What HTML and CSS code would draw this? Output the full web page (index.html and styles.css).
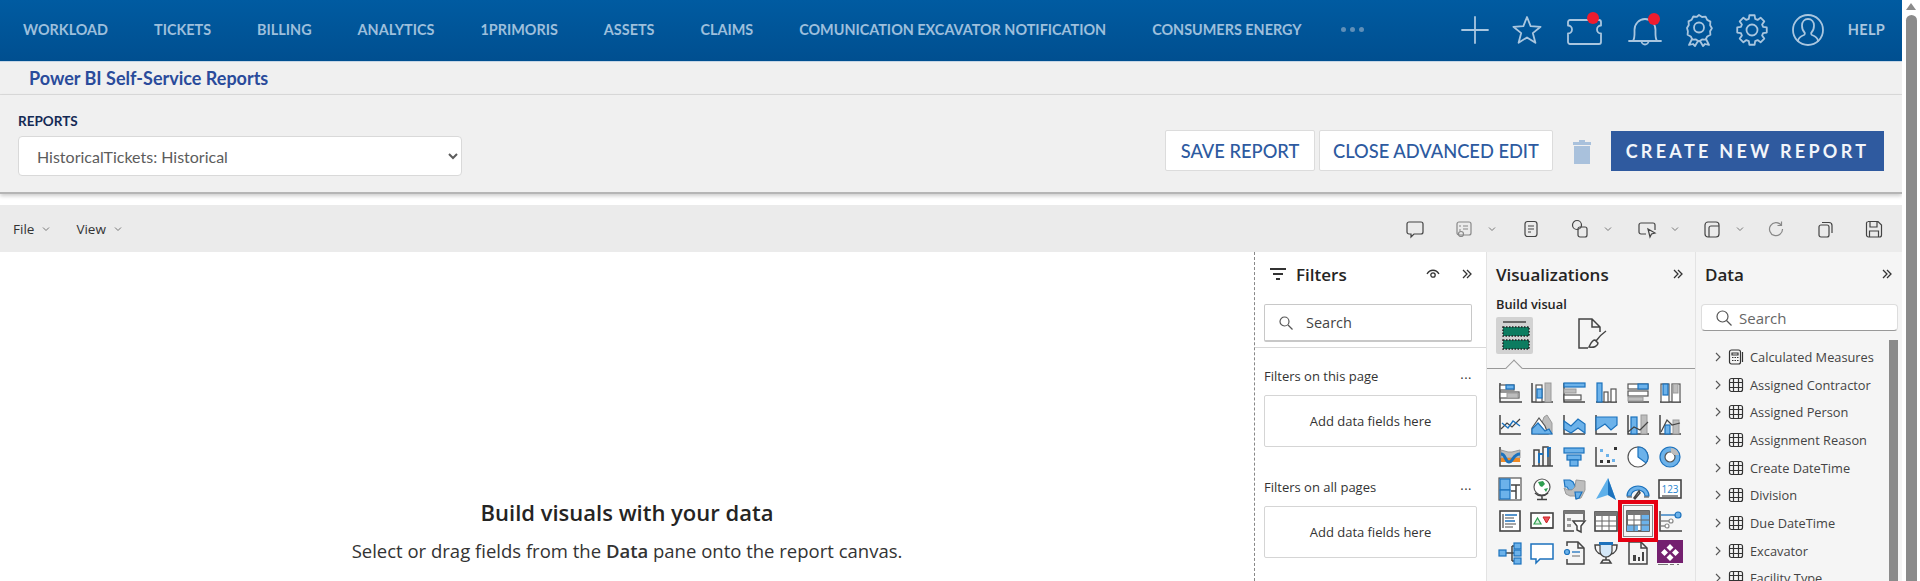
FILE: index.html
```html
<!DOCTYPE html>
<html lang="en">
<head>
<meta charset="utf-8">
<title>Power BI Self-Service Reports</title>
<link rel="stylesheet" href="styles.css">
</head>
<body>
<svg class="defs" aria-hidden="true">
  <symbol id="tbl" viewBox="0 0 16 16"><rect x="1.5" y="1.5" width="13" height="13" rx="2" class="thin"/><path d="M1.5 5.5h13M1.5 10.5h13M5.5 1.5v13M10.5 1.5v13" class="thin"/></symbol>
  <symbol id="dbl" viewBox="0 0 12 12"><path d="M2 2l4 4-4 4M6 2l4 4-4 4" class="chev2"/></symbol>
  <symbol id="dn" viewBox="0 0 10 10"><path d="M2 3.5l3 3 3-3" class="chevd"/></symbol>
</svg>
<div class="page">
  <header class="nav">
    <a class="nav-i">WORKLOAD</a><a class="nav-i">TICKETS</a><a class="nav-i">BILLING</a><a class="nav-i">ANALYTICS</a><a class="nav-i">1PRIMORIS</a><a class="nav-i">ASSETS</a><a class="nav-i">CLAIMS</a><a class="nav-i">COMUNICATION EXCAVATOR NOTIFICATION</a><a class="nav-i">CONSUMERS ENERGY</a>
    <span class="more"><i></i><i></i><i></i></span>
    <div class="nav-icons">
      <svg class="ni" width="26" height="26" viewBox="0 0 26 26"><path d="M13 0v26M0 13h26"/></svg>
      <svg class="ni" width="30" height="30" viewBox="0 0 30 30"><path d="M15 2l3.600 9.200 10 .6-7.800 6.300 2.600 9.700L15 22.400l-8.400 5.400 2.600-9.700-7.800-6.300 10-.6z"/></svg>
      <svg class="ni" width="38" height="32" viewBox="0 0 38 32"><path d="M4 6h29a2 2 0 0 1 2 2v3.500a4 4 0 0 0 0 8V28a2 2 0 0 1-2 2H4a2 2 0 0 1-2-2v-8.500a4 4 0 0 0 0-8V8a2 2 0 0 1 2-2z"/><circle class="dot" cx="27" cy="4" r="6"/></svg>
      <svg class="ni" width="34" height="32" viewBox="0 0 34 32"><path d="M1 27h32M5 27c2-3 1.500-7 1.500-11 0-6 4.500-11 10.500-11s10.500 5 10.500 11c0 4-.5 8 1.500 11M13.500 27a3.500 3.500 0 0 0 7 0"/><circle class="dot" cx="26" cy="5" r="6"/></svg>
      <svg class="ni" width="26" height="32" viewBox="0 0 26 32"><path d="M13 1l3 2 3.600-.3 1.600 3.200 3.200 1.700-.3 3.600 1.800 3-1.800 3 .3 3.600-3.200 1.700-1.600 3.200-3.600-.3-3 2-3-2-3.600.3-1.600-3.200-3.200-1.700.3-3.600L1 14l1.800-3-.3-3.600 3.200-1.700 1.600-3.200 3.600.3z"/><circle cx="13" cy="13.500" r="5"/><path d="M6 25l-3 6 4-1 2 2 3-5M20 25l3 6-4-1-2 2-3-5"/></svg>
      <svg class="ni" width="32" height="32" viewBox="0 0 32 32"><polygon points="27.05,12.83 30.77,13.4 30.77,18.6 27.05,19.17 26.06,21.58 28.29,24.6 24.6,28.29 21.58,26.06 19.17,27.05 18.6,30.77 13.4,30.77 12.83,27.05 10.42,26.06 7.4,28.29 3.71,24.6 5.94,21.58 4.95,19.17 1.23,18.6 1.23,13.4 4.95,12.83 5.94,10.42 3.71,7.4 7.4,3.71 10.42,5.94 12.83,4.95 13.4,1.23 18.6,1.23 19.17,4.95 21.58,5.94 24.6,3.71 28.29,7.4 26.06,10.42"/><circle cx="16" cy="16" r="5.500"/></svg>
      <svg class="ni" width="32" height="32" viewBox="0 0 32 32"><circle cx="16" cy="16" r="15"/><path d="M6 27c.5-4 3-5 6-6 1-.5 1-2 .5-2.500-1.500-1.500-2.500-4-2.500-7 0-4 2.500-6.500 6-6.500s6 2.500 6 6.500c0 3-1 5.500-2.500 7-.5.5-.5 2 .5 2.500 3 1 5.500 2 6 6"/></svg>
      <span class="help">HELP</span>
    </div>
  </header>

  <div class="title-row"><h1 class="title">Power BI Self-Service Reports</h1></div>

  <section class="reports">
    <div class="rep-left">
      <label class="rep-label" for="rep">REPORTS</label>
      <select class="rep-select" id="rep"><option>HistoricalTickets: Historical</option></select>
    </div>
    <div class="rep-actions">
      <button class="btn">SAVE REPORT</button>
      <button class="btn btn-close">CLOSE ADVANCED EDIT</button>
      <svg class="trash" width="18" height="24" viewBox="0 0 18 24"><path d="M6 0h6v2h6v3H0V2h6zM1 6h16v18H1z"/></svg>
      <button class="btn-primary">CREATE NEW REPORT</button>
    </div>
  </section>

  <div class="toolbar">
    <span class="menu">File<svg class="dn" width="10" height="10"><use href="#dn"/></svg></span>
    <span class="menu menu-v">View<svg class="dn" width="10" height="10"><use href="#dn"/></svg></span>
    <div class="tb-right">
      <svg class="ti" width="20" height="20" viewBox="0 0 20 20"><path d="M4 3h12a2 2 0 0 1 2 2v8a2 2 0 0 1-2 2H9l-3 3v-3H4a2 2 0 0 1-2-2V5a2 2 0 0 1 2-2z"/></svg>
      <span class="tg tw"><svg class="ti mut" width="20" height="20" viewBox="0 0 20 20"><rect x="3" y="3" width="14" height="13" rx="2"/><path d="M9 7h5M9 10h5M5 7h2M5 11h2"/><circle cx="7" cy="15" r="2.500"/></svg><svg class="dn" width="10" height="10"><use href="#dn"/></svg></span>
      <svg class="ti" width="20" height="20" viewBox="0 0 20 20"><rect x="4" y="2.500" width="12" height="15" rx="2.500"/><path d="M7 7h6M7 10h6M7 13h3"/></svg>
      <span class="tg tw"><svg class="ti" width="20" height="20" viewBox="0 0 20 20"><circle cx="7" cy="6" r="4.500"/><rect x="8" y="8" width="9" height="10" rx="2"/></svg><svg class="dn" width="10" height="10"><use href="#dn"/></svg></span>
      <span class="tg"><svg class="ti" width="20" height="20" viewBox="0 0 20 20"><path d="M9 15H4a2 2 0 0 1-2-2V6a2 2 0 0 1 2-2h12a2 2 0 0 1 2 2v5M11 10l2 8 1.500-3 3.500-1z"/></svg><svg class="dn" width="10" height="10"><use href="#dn"/></svg></span>
      <span class="tg tn2"><svg class="ti" width="20" height="20" viewBox="0 0 20 20"><rect x="3" y="3" width="14" height="15" rx="3"/><path d="M7 18V9a2 2 0 0 1 2-2h8"/></svg><svg class="dn" width="10" height="10"><use href="#dn"/></svg></span>
      <svg class="ti mut tn3" width="20" height="20" viewBox="0 0 20 20"><path d="M15 6a6.500 6.500 0 1 0 1.500 4M15.500 2.500V6.500h-4"/></svg>
      <svg class="ti tw" width="20" height="20" viewBox="0 0 20 20"><rect x="4" y="6" width="10" height="12" rx="2"/><path d="M7 3.500h7a3 3 0 0 1 3 3V14"/></svg>
      <svg class="ti tw" width="20" height="20" viewBox="0 0 20 20"><path d="M4 2.500h10l3.500 3.500v10a2 2 0 0 1-2 2h-11a2 2 0 0 1-2-2v-12a2 2 0 0 1 2-1.500zM6 3v5h7V3M5.500 18v-6h9v6"/></svg>
    </div>
  </div>

  <main class="work">
    <div class="canvas">
      <h2 class="empty-h">Build visuals with your data</h2>
      <p class="empty-p">Select or drag fields from the <b>Data</b> pane onto the report canvas.</p>
    </div>

    <aside class="filters">
      <div class="p-head">
        <svg class="f-ico" width="16" height="12" viewBox="0 0 16 12"><path d="M0 1h16M3 6h10M6 11h4"/></svg>
        <span class="p-title">Filters</span>
        <svg class="eye" width="14" height="12" viewBox="0 0 14 12"><path d="M1 6c3-5 9-5 12 0"/><circle cx="7" cy="7" r="2.200"/></svg>
        <svg class="dbl" width="12" height="12"><use href="#dbl"/></svg>
      </div>
      <div class="f-search">
        <svg class="s-ico" width="14" height="14" viewBox="0 0 14 14"><circle cx="5.500" cy="5.500" r="4.500"/><path d="M9 9l4.500 4.500"/></svg>
        <span>Search</span>
      </div>
      <div class="f-body">
        <div class="f-label"><span>Filters on this page</span><span class="ell">...</span></div>
        <div class="f-box">Add data fields here</div>
        <div class="f-label f-label2"><span>Filters on all pages</span><span class="ell">...</span></div>
        <div class="f-box">Add data fields here</div>
      </div>
    </aside>

    <aside class="viz">
      <div class="p-head p-head-v"><span class="p-title">Visualizations</span><svg class="dbl" width="12" height="12"><use href="#dbl"/></svg></div>
      <div class="build">Build visual</div>
      <div class="tabs">
        <span class="tab-sel"><svg width="30" height="30" viewBox="0 0 30 30"><path d="M3 1h23" class="a"/><rect x="3" y="6" width="26" height="9" class="grn"/><rect x="3" y="19" width="26" height="9" class="grn"/></svg></span>
        <svg class="tab2" width="30" height="34" viewBox="0 0 30 34"><path d="M11 31H2V2h13l8 8v5M15 2v8h8" class="a"/><path d="M29 14c-3 2-7 6-10 10" class="a"/><path d="M18 23c-3 0-4 3-6 7 5 1 9-1 9-4z" class="a"/></svg>
      </div>
      <div class="vgrid">
        <svg class="v" viewBox="0 0 24 24"><path class="a" d="M2 2v19h22"/><rect class="w" x="2" y="4" width="14" height="5"/><rect class="b" x="8" y="4" width="8" height="4"/><rect class="w" x="2" y="11" width="19" height="6"/><rect class="g" x="9" y="12" width="11" height="5"/></svg>
        <svg class="v" viewBox="0 0 24 24"><path class="a" d="M2 2v19h21"/><rect class="w" x="6" y="4" width="6" height="17"/><rect class="b" x="7" y="8" width="5" height="9"/><rect class="g" x="15" y="2" width="6" height="19"/></svg>
        <svg class="v" viewBox="0 0 24 24"><path class="a" d="M2 2v19h21"/><rect class="b" x="2" y="2" width="21" height="4"/><rect class="g" x="2" y="8" width="12" height="4"/><rect class="w" x="2" y="14" width="17" height="5"/></svg>
        <svg class="v" viewBox="0 0 24 24"><path class="a" d="M2 21h21"/><rect class="b" x="3" y="2" width="5" height="19"/><rect class="w" x="10" y="11" width="4" height="10"/><rect class="w" x="17" y="8" width="5" height="13"/></svg>
        <svg class="v" viewBox="0 0 24 24"><path class="a" d="M2 21h21"/><rect class="w" x="2" y="3" width="20" height="5"/><rect class="b" x="12" y="3" width="10" height="5"/><rect class="w" x="2" y="10" width="20" height="5"/><rect class="g" x="2" y="16" width="15" height="4"/></svg>
        <svg class="v" viewBox="0 0 24 24"><path class="a" d="M2 21h21"/><rect class="w" x="3" y="3" width="8" height="18"/><rect class="b" x="5" y="3" width="5" height="11"/><rect class="w" x="14" y="3" width="8" height="18"/><rect class="g" x="15" y="3" width="5" height="9"/></svg>

        <svg class="v" viewBox="0 0 24 24"><path class="a" d="M2 2v19h21"/><path class="a1" d="M3 16l6-6 5 4 8-8"/><path class="bl" d="M4 10l6 5 5-7 7 5"/></svg>
        <svg class="v" viewBox="0 0 24 24"><path class="g" d="M14 4l3-2 5 8v11H8z"/><path class="w" d="M2 15L9 5l6 8 3 8H2z"/><path class="b" d="M2 21v-5l6-6 7 8 4-2 3 5z"/></svg>
        <svg class="v" viewBox="0 0 24 24"><path class="a" d="M2 2v19h21"/><path class="b" d="M2 8l7 5 7-7 7 5v9l-7-5-7 5-7-4z"/></svg>
        <svg class="v" viewBox="0 0 24 24"><path class="a" d="M2 2v19h21"/><path class="b" d="M2 4h21v8l-6 5-6-6-9 6z"/></svg>
        <svg class="v" viewBox="0 0 24 24"><path class="a" d="M2 2v19h21"/><rect class="b" x="5" y="4" width="6" height="17"/><rect class="g" x="15" y="2" width="6" height="19"/><path class="a1" d="M2 19l6-5 6 3 8-8"/></svg>
        <svg class="v" viewBox="0 0 24 24"><path class="a" d="M2 2v19h21"/><rect class="b" x="7" y="12" width="5" height="9"/><rect class="g" x="15" y="7" width="6" height="14"/><path class="a1" d="M3 19l6-12 5 5 8-2"/></svg>

        <svg class="v" viewBox="0 0 24 24"><path class="a" d="M2 2v19h21"/><path class="g" d="M3 5l7 2 4 0 8-2v8H3z"/><rect class="o" x="3" y="13" width="19" height="4"/><path class="thick" d="M3 9c5 0 4 8 8 8s4-8 11-8"/></svg>
        <svg class="v" viewBox="0 0 24 24"><path class="a" d="M2 21h21M4 21V5h5v16M13 21V2h5v19"/><path class="a" d="M20 21V3"/><path class="bt" d="M9 18V9h4M18 12V3h3"/></svg>
        <svg class="v" viewBox="0 0 24 24"><rect class="b" x="2" y="3" width="20" height="5"/><rect class="b" x="5" y="10" width="14" height="5"/><rect class="b" x="8" y="15" width="8" height="6"/></svg>
        <svg class="v" viewBox="0 0 24 24"><path class="a" d="M2 2v19h21"/><path class="sq-b" d="M6 4h3v3H6zM12 9h3v3h-3zM18 14h3v3h-3z"/><path class="sq-d" d="M20 2h3v3h-3zM6 15h3v3H6zM13 15h3v3h-3z"/></svg>
        <svg class="v" viewBox="0 0 24 24"><circle class="w" cx="12" cy="12" r="10"/><path class="b" d="M12 2a10 10 0 0 1 8 16l-8-6z"/></svg>
        <svg class="v" viewBox="0 0 24 24"><circle class="b" cx="12" cy="12" r="10"/><circle class="w" cx="12" cy="12" r="5"/><path class="gf" d="M13 3a9 9 0 0 1 8 7h-5a4 4 0 0 0-3-2z"/></svg>

        <svg class="v" viewBox="0 0 24 24"><rect class="w" x="1" y="1" width="22" height="22"/><rect class="b" x="2" y="2" width="10" height="11"/><rect class="b" x="2" y="13" width="10" height="9"/><path class="a" d="M13 8h9M18 8v14M13 14h5"/></svg>
        <svg class="v" viewBox="0 0 24 24"><circle cx="12" cy="10" r="8" class="globe"/><path class="grf" d="M8 5l5-1 2 3-3 3-2-1zM14 12l4-1-2 4z"/><path class="a" d="M5 16a9 9 0 0 0 13 0M12 19v3M7 22.500h10"/></svg>
        <svg class="v" viewBox="0 0 24 24"><path class="b" d="M2 3h6l3 2 3 6-2 2H7L5 10H3z"/><path class="g" d="M14 3l9 1v9l-4 8-5 1-1-3h-5l-4-2-2-6 4 2h4l3-3z"/><path class="b" d="M13 15h7l-3 6-3 1z"/></svg>
        <svg class="v" viewBox="0 0 24 24"><path class="arrow" d="M14 1l8 22-8-5-12 4z"/><path class="arrow2" d="M14 1v17l8 5z"/></svg>
        <svg class="v" viewBox="0 0 24 24"><path class="b" d="M1 19a11 10 0 0 1 22 0h-4a7 6 0 0 0-14 0z"/><path class="a" d="M8 21l5-7 1 2-5 6z"/><path class="a1" d="M1 20h5M18 20h5"/></svg>
        <svg class="v" viewBox="0 0 24 24"><rect class="w-d" x="1" y="3" width="22" height="18"/><text x="12" y="16" class="num">123</text><path class="a1" d="M4 19h16"/></svg>

        <svg class="v" viewBox="0 0 24 24"><rect class="w-d" x="2" y="2" width="20" height="20"/><path class="bl" d="M7 6h12M7 12h10"/><path class="gl" d="M7 9h9M7 15h11M7 18h8"/><path class="a1" d="M5 5v14"/></svg>
        <svg class="v" viewBox="0 0 24 24"><rect class="w-d" x="1" y="4" width="22" height="15"/><path class="tri-g" d="M4 15l3.500-6 3.500 6z"/><path class="tri-r" d="M13 8h7l-3.500 6z"/><path class="a1" d="M1 19h22"/></svg>
        <svg class="v" viewBox="0 0 24 24"><path class="a" d="M12 22H2V2h20v9"/><path class="hdr" d="M2 2h20v3H2z"/><path class="sq-g" d="M5 9h4v3H5zM5 15h4v3H5z"/><path class="b-d" d="M11 12h12l-4 5v6l-4-2v-4z"/></svg>
        <svg class="v" viewBox="0 0 24 24"><rect class="w-d" x="1" y="3" width="22" height="19"/><rect class="hdr" x="1" y="3" width="22" height="4"/><path class="gl2" d="M1 12h22M1 17h22M8 7v15M15 7v15"/></svg>
        <span class="v-hl"><svg class="v" viewBox="0 0 24 24"><rect class="w-d" x="1" y="2" width="22" height="20"/><rect class="hdr" x="1" y="2" width="22" height="4"/><rect class="bf" x="1" y="16" width="11" height="6"/><rect class="bf" x="15" y="6" width="8" height="16"/><path class="gl2" d="M1 11h22M1 16h22M8 6v16M15 6v16"/></svg></span>
        <svg class="v" viewBox="0 0 24 24"><path class="a" d="M2 2v20h22"/><path class="bl" d="M3 6h15"/><circle class="b" cx="20" cy="6" r="3"/><path class="gl" d="M3 12h10M3 17h6"/><circle class="c-g" cx="13" cy="12" r="2"/><circle class="c-g" cx="9" cy="17" r="2"/></svg>

        <svg class="v" viewBox="0 0 24 24"><path class="a" d="M8 12h6M14 5v15M14 5h2M14 12h2M14 20h2"/><rect class="b" x="1" y="9" width="7" height="6"/><rect class="b" x="16" y="2" width="7" height="6"/><rect class="b" x="16" y="9" width="7" height="6"/><rect class="b" x="16" y="17" width="7" height="6"/></svg>
        <svg class="v" viewBox="0 0 24 24"><path class="bw" d="M1 3h22v15H10l-4 4v-4H1z"/></svg>
        <svg class="v" viewBox="0 0 24 24"><path class="a" d="M5 5V1h11l6 6v16H5v-5"/><path class="a" d="M16 1v6h6"/><circle class="b" cx="5" cy="11" r="2.500"/><path class="bl" d="M10 11h8"/><path class="gl" d="M10 15h8"/></svg>
        <svg class="v" viewBox="0 0 24 24"><path class="a" d="M6 4H1c0 6 2 8 6 9M18 4h5c0 6-2 8-6 9M12 15v4M7 22h10l-2-3H9z"/><path class="cup" d="M6 2h12v8a6 6 0 0 1-12 0z"/><rect class="bf2" x="5" y="1" width="14" height="3"/></svg>
        <svg class="v" viewBox="0 0 24 24"><path class="a" d="M3 1h12l6 6v16H3z"/><path class="a" d="M15 1v6h6"/><path class="bars" d="M7 14h3v6H7zM12 16h2v4h-2zM16 11h2v9h-2z"/></svg>
        <svg class="v" viewBox="0 0 24 24"><rect class="pur" x="-1" y="-1" width="26" height="23"/><path class="dia" d="M12 3l3.500 3.500-3.500 3.500-3.500-3.500zM6.500 8l3.500 3.500L6.500 15 3 11.500zM17.500 8l3.500 3.500-3.500 3.500-3.500-3.500zM12 13l3.500 3.500L12 20l-3.500-3.500z"/><path class="dash" d="M0 23.500h10M12 23.500h4M19 23.500h2"/></svg>
      </div>
    </aside>

    <aside class="data">
      <div class="p-head p-head-d"><span class="p-title">Data</span><svg class="dbl" width="12" height="12"><use href="#dbl"/></svg></div>
      <div class="d-search">
        <svg class="s-ico" width="16" height="16" viewBox="0 0 16 16"><circle cx="6.500" cy="6.500" r="5.500"/><path d="M10.500 10.500l5 5"/></svg>
        <span>Search</span>
      </div>
      <div class="d-body">
        <ul class="tree">
          <li><svg class="tc" width="8" height="10" viewBox="0 0 8 10"><path d="M2 1l4 4-4 4"/></svg><svg class="calc" width="16" height="16" viewBox="0 0 16 16"><rect x="1.500" y="1" width="11" height="14" rx="2"/><path d="M4 4h6v2H4zM4 8.500h1.500M6.500 8.500H8M9 8.500h1.500M4 11.500h1.500M6.500 11.500H8M9 11.500h1.500M14.500 3v10"/></svg>Calculated Measures</li>
          <li><svg class="tc" width="8" height="10" viewBox="0 0 8 10"><path d="M2 1l4 4-4 4"/></svg><svg class="tbl" width="16" height="16"><use href="#tbl"/></svg>Assigned Contractor</li>
          <li><svg class="tc" width="8" height="10" viewBox="0 0 8 10"><path d="M2 1l4 4-4 4"/></svg><svg class="tbl" width="16" height="16"><use href="#tbl"/></svg>Assigned Person</li>
          <li><svg class="tc" width="8" height="10" viewBox="0 0 8 10"><path d="M2 1l4 4-4 4"/></svg><svg class="tbl" width="16" height="16"><use href="#tbl"/></svg>Assignment Reason</li>
          <li><svg class="tc" width="8" height="10" viewBox="0 0 8 10"><path d="M2 1l4 4-4 4"/></svg><svg class="tbl" width="16" height="16"><use href="#tbl"/></svg>Create DateTime</li>
          <li><svg class="tc" width="8" height="10" viewBox="0 0 8 10"><path d="M2 1l4 4-4 4"/></svg><svg class="tbl" width="16" height="16"><use href="#tbl"/></svg>Division</li>
          <li><svg class="tc" width="8" height="10" viewBox="0 0 8 10"><path d="M2 1l4 4-4 4"/></svg><svg class="tbl" width="16" height="16"><use href="#tbl"/></svg>Due DateTime</li>
          <li><svg class="tc" width="8" height="10" viewBox="0 0 8 10"><path d="M2 1l4 4-4 4"/></svg><svg class="tbl" width="16" height="16"><use href="#tbl"/></svg>Excavator</li>
          <li><svg class="tc" width="8" height="10" viewBox="0 0 8 10"><path d="M2 1l4 4-4 4"/></svg><svg class="tbl" width="16" height="16"><use href="#tbl"/></svg>Facility Type</li>
        </ul>
        <div class="d-thumb"></div>
      </div>
    </aside>
  </main>
</div>
<div class="vscroll"><span class="up"></span><span class="thumb"></span></div>
</body>
</html>
```
FILE: styles.css
```css
* { box-sizing: border-box; }
html, body { margin: 0; height: 581px; overflow: hidden; background: #fff; }
body { display: flex; font-family: "Open Sans", sans-serif; color: #252423; }
.defs { display: none; }
.thin { fill: none; stroke: #333; stroke-width: 1.2; }
.chev2 { fill: none; stroke: #333; stroke-width: 1.3; }
.chevd { fill: none; stroke: #777; stroke-width: 1; }
.page { width: 1902px; height: 581px; display: flex; flex-direction: column; }

.nav { height: 62px; flex: none; display: flex; align-items: center; padding: 0 17px 2px 23px; gap: 46px;
  background: linear-gradient(#005ba1, #004f90); border-bottom: 1px solid #c6d6e6; }
.nav-i { font: 700 14.400px "Lato", sans-serif; color: #9dbfdc; white-space: nowrap; }
.more { display: flex; gap: 4px; margin-left: -7px; }
.more i { width: 5px; height: 5px; border-radius: 50%; background: #5f8fb8; }
.nav-icons { margin-left: auto; display: flex; align-items: center; gap: 24px; }
.ni { fill: none; stroke: #a9c6df; stroke-width: 1.800; stroke-linejoin: round; stroke-linecap: round; overflow: visible; }
.ni .dot { fill: #ee1c2e; stroke: none; }
.help { font: 700 14.500px "Lato", sans-serif; color: #a9c6df; letter-spacing: .3px; }

.title-row { height: 33px; flex: none; background: #f0f0f0; border-bottom: 1px solid #dcdcdc; padding-left: 29px; display: flex; align-items: center; }
.title { margin: 0; font: 700 18px "Lato", sans-serif; color: #2a4b9b; }

.reports { height: 99px; flex: none; background: #f0f0f0; border-bottom: 2px solid #b5b5b5; box-shadow: 0 2px 4px rgba(0,0,0,.2); display: flex; justify-content: space-between; padding: 19px 18px 0; position: relative; }
.rep-left { display: flex; flex-direction: column; }
.rep-label { font: 700 13.500px/14px "Lato", sans-serif; color: #142a55; margin-bottom: 8px; }
.rep-select { width: 444px; height: 40px; padding-left: 14px; font: 400 16px "Lato", sans-serif; color: #5c5c5c; background: #fff; border: 1px solid #d9d9d9; border-radius: 4px; }
.rep-actions { display: flex; align-items: flex-start; margin-top: 16px; }
.btn { height: 41px; width: 150px; background: #fff; border: 1px solid #dcdcdc; border-radius: 2px; color: #2d5aa0; font: 500 18.300px "Lato", sans-serif; padding: 0; }
.btn-close { width: 234px; margin-left: 4px; }
.trash { fill: #a9c1dc; margin: 10px 20px 0; }
.btn-primary { width: 273px; height: 40px; margin-top: 1px; background: #2f5a9f; color: #f2f5fa; border: 1px solid #2f5a9f; font: 700 18px "Lato", sans-serif; letter-spacing: 3.300px; padding: 0; }

.toolbar { height: 47px; flex: none; margin-top: 11px; background: #ebebeb; display: flex; align-items: center; padding: 0 18px 0 13px; font-size: 13.500px; color: #333; }
.menu { display: inline-flex; align-items: center; gap: 7px; }
.menu-v { margin-left: 25px; }
.dn { flex: none; }
.tb-right { margin-left: auto; display: flex; align-items: center; gap: 24px; }
.tg { display: inline-flex; align-items: center; gap: 13px; }
.tw { margin-left: 5px; }
.tn2 { margin-left: -2px; }
.tn3 { margin-left: -3px; }
.ti { fill: none; stroke: #444; stroke-width: 1.2; }
.ti.mut { stroke: #888; }

.work { flex: 1; min-height: 0; display: flex; background: #fff; }
.canvas { width: 1255px; flex: none; border-right: 1px dashed #888; text-align: center; padding-top: 246px; }
.empty-h { margin: 0; font: 600 22px/28px "Open Sans", sans-serif; color: #252423; }
.empty-p { margin: 12px 0 0; font: 400 18.500px/26px "Open Sans", sans-serif; color: #333; }
.empty-p b { font-weight: 600; }

.p-head { height: 44px; display: flex; align-items: center; }
.p-title { font: 600 17px "Open Sans", sans-serif; color: #252423; }
.dbl { flex: none; }

.filters { width: 232px; flex: none; background: #fff; border-right: 1px solid #e3e3e3; }
.filters .p-head { padding: 0 13px 0 15px; height: 44px; }
.f-ico { fill: none; stroke: #333; stroke-width: 2; margin-right: 10px; }
.eye { fill: none; stroke: #333; stroke-width: 1.3; margin-left: auto; margin-right: 21px; }
.f-search { margin: 8px 14px 0 9px; height: 38px; background: #fff; border: 1px solid #c8c8c8; border-radius: 2px; border-bottom-width: 2px; display: flex; align-items: center; padding-left: 14px; font-size: 14.500px; color: #444; gap: 13px; }
.s-ico { fill: none; stroke: #444; stroke-width: 1.2; flex: none; }
.f-body { margin-top: 5px; border-top: 1px solid #d8d8d8; padding: 18px 9px 0; }
.f-label { display: flex; justify-content: space-between; font-size: 13px; line-height: 20px; color: #333; padding-right: 5px; }
.f-label2 { margin-top: 30px; }
.ell { letter-spacing: .5px; line-height: 16px; }
.f-box { margin-top: 9px; height: 52px; border: 1px solid #d5d5d5; border-radius: 2px; display: flex; align-items: center; justify-content: center; font-size: 13px; color: #333; }

.viz { width: 209px; flex: none; background: #f5f5f5; border-right: 1px solid #e3e3e3; }
.p-head-v { padding: 0 11px 0 9px; justify-content: space-between; }
.build { padding-left: 9px; font: 600 12.800px/16px "Open Sans", sans-serif; color: #252423; }
.tabs { margin-top: 5px; padding-left: 9px; height: 52px; border-bottom: 1px solid #999; display: flex; align-items: flex-start; position: relative; }
.tabs::after { content: ""; position: absolute; left: 21px; bottom: -6px; width: 11px; height: 11px; background: #f5f5f5; border: 1px solid #999; border-width: 1px 0 0 1px; transform: rotate(45deg); }
.tab-sel { width: 37px; height: 37px; background: #d2d2d2; border-radius: 2px; display: flex; align-items: center; justify-content: center; }
.tab2 { margin-left: 44px; }
.grn { fill: #0c7c60; stroke: #222; stroke-width: 1.500; stroke-dasharray: 1.500 1.500; }
.a { fill: none; stroke: #444; stroke-width: 1.500; }
.a1 { fill: none; stroke: #444; stroke-width: 1.200; }
.w { fill: #fff; stroke: #555; stroke-width: 1.200; }
.w-d { fill: #fff; stroke: #444; stroke-width: 1.600; }
.b { fill: #6cb2ea; stroke: #1c72bd; stroke-width: 1.200; }
.g { fill: #bdbdbd; stroke: #9a9a9a; stroke-width: 1; }
.bl { fill: none; stroke: #1c72bd; stroke-width: 1.300; }
.gl { fill: none; stroke: #888; stroke-width: 1.300; }
.gl2 { fill: none; stroke: #666; stroke-width: 1; }
.o { fill: #f08a24; }
.thick { fill: none; stroke: #1c72bd; stroke-width: 3; }
.bt { fill: none; stroke: #1c72bd; stroke-width: 2; }
.sq-b { fill: #6cb2ea; }
.sq-d { fill: #333; }
.sq-g { fill: #9a9a9a; }
.gf { fill: #bdbdbd; }
.globe { fill: #fff; stroke: #555; stroke-width: 1.200; }
.grf { fill: #2e9e4f; }
.arrow { fill: #5eb0ea; }
.arrow2 { fill: #1c72bd; }
.num { font: 400 10px "Open Sans", sans-serif; fill: #2a86cf; text-anchor: middle; }
.tri-g { fill: #d7f0dc; stroke: #2e9e4f; stroke-width: 1.200; }
.tri-r { fill: #e8505b; stroke: #c22; stroke-width: 1; }
.hdr { fill: #777; }
.b-d { fill: #fff; stroke: #444; stroke-width: 1.500; }
.bf { fill: #6cb2ea; }
.bf2 { fill: #1c72bd; }
.c-g { fill: #fff; stroke: #888; stroke-width: 1.200; }
.bw { fill: #fff; stroke: #1c72bd; stroke-width: 1.500; }
.cup { fill: #d4e8f8; stroke: #444; stroke-width: 1.200; }
.bars { fill: #444; }
.pur { fill: #74206f; }
.dia { fill: #fff; }
.dash { fill: none; stroke: #777; stroke-width: 1; }
.vgrid { padding: 8px 0 0 7px; display: grid; grid-template-columns: repeat(6, 32px); grid-auto-rows: 32px; justify-items: center; align-items: center; }
.v { width: 24px; height: 24px; display: block; overflow: visible; }
.v-hl { position: relative; display: block; }
.v-hl::after { content: ""; position: absolute; inset: -9px -8px -9px -8px; border: 4px solid #e60012; outline: 1px solid #888; outline-offset: -6px; }

.data { flex: 1; background: #f5f5f5; display: flex; flex-direction: column; min-height: 0; }
.p-head-d { padding: 0 9px 0 9px; justify-content: space-between; flex: none; }
.d-search { margin: 8px 4px 0 5px; height: 27px; flex: none; background: #fff; border: 1px solid #ddd; border-bottom: 1px solid #999; border-radius: 4px; display: flex; align-items: center; padding-left: 14px; gap: 7px; font-size: 15px; color: #666; }
.s-ico { stroke: #555; }
.d-body { flex: 1; min-height: 0; display: flex; margin-top: 9px; overflow: hidden; padding-right: 4px; }
.tree { list-style: none; margin: 0; padding: 3px 0 0 18px; flex: 1; font-size: 12.800px; color: #444; white-space: nowrap; overflow: hidden; }
.tree li { height: 27.700px; display: flex; align-items: center; }
.tc { fill: none; stroke: #555; stroke-width: 1.100; margin-right: 6px; flex: none; }
.calc { fill: none; stroke: #333; stroke-width: 1.200; margin-right: 6px; flex: none; }
.tbl { margin-right: 6px; flex: none; }
.d-thumb { width: 9px; background: #8b8b8b; flex: none; }

.vscroll { width: 18px; flex: none; background: #fff; position: relative; display: flex; flex-direction: column; align-items: center; }
.up { margin-top: 3px; width: 0; height: 0; border: 5px solid transparent; border-top: 0; border-bottom: 7px solid #8b8b8b; }
.thumb { margin-top: 5px; flex: 1; width: 11px; background: #8b8b8b; border-radius: 6px 6px 0 0; }
```
